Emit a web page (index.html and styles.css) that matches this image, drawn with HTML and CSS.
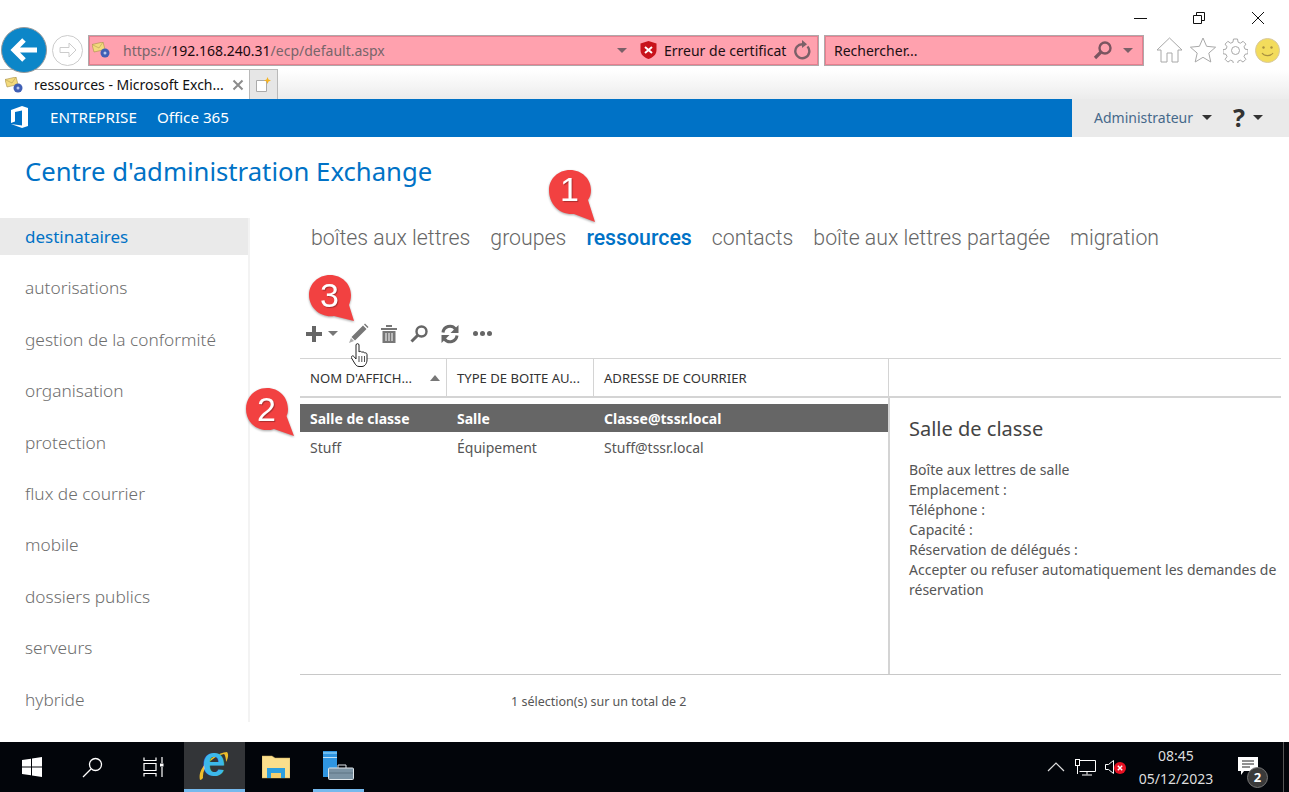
FILE: index.html
```html
<!DOCTYPE html>
<html lang="fr">
<head>
<meta charset="UTF-8">
<title>ressources - Microsoft Exchange</title>
<link rel="stylesheet" href="styles.css">
</head>
<body>
<div class="browser">
    <div class="win-controls">
        <svg width="14" height="14" viewBox="0 0 14 14"><path d="M1 7.500h13" stroke="#111" fill="none"/></svg>
        <svg width="14" height="14" viewBox="0 0 14 14"><path d="M1.500 4.500h8v8h-8zM4.500 4.500v-3h8v8h-3" stroke="#111" fill="none"/></svg>
        <svg width="14" height="14" viewBox="0 0 14 14"><path d="M1 1l12 12M13 1L1 13" stroke="#111" fill="none"/></svg>
    </div>
    <div class="nav-row">
        <div class="back-btn">
            <svg width="28" height="28" viewBox="0 0 28 28"><path d="M14 4L4 14l10 10M5 14h22" stroke="#fff" stroke-width="5" fill="none"/></svg>
        </div>
        <div class="fwd-btn">
            <svg width="20" height="20" viewBox="0 0 20 20"><path d="M11 3l7 7-7 7v-4.500H2v-5h9z" stroke="#ccc" fill="none"/></svg>
        </div>
        <div class="address">
            <svg class="site-icon" width="18" height="16" viewBox="0 0 18 16"><path d="M0 2.500L11 0l2 7.500-11 2.500z" fill="#f3da7c" stroke="#a8914c" stroke-width=".6"/><path d="M0 2.500l7 3.500 4-6" stroke="#a8914c" stroke-width=".5" fill="none"/><circle cx="13" cy="11" r="4.500" fill="#3f5fb5"/><circle cx="13" cy="11" r="1.500" fill="#b9c9ee"/></svg>
            <span class="url">https://<b>192.168.240.31</b>/ecp/default.aspx</span>
            <span class="caret caret-addr"></span>
            <svg class="shield" width="17" height="18" viewBox="0 0 17 18"><path d="M8.500 0l8 2.500V9c0 5-4 7.500-8 9-4-1.500-8-4-8-9V2.500z" fill="#c8131b"/><path d="M5 6l7 6M12 6l-7 6" stroke="#fff" stroke-width="2"/></svg>
            <span class="cert">Erreur de certificat</span>
            <svg class="reload" width="18" height="20" viewBox="0 0 18 20"><path d="M14.500 6.500a7 7 0 1 1-5-2.300" stroke="#7b6068" stroke-width="2.400" fill="none"/><path d="M9 0l5 4.200-5 3.800z" fill="#7b6068"/></svg>
        </div>
        <div class="search">
            <span class="search-text">Rechercher...</span>
            <svg width="20" height="20" viewBox="0 0 20 20"><circle cx="12" cy="8" r="5.500" stroke="#7b5560" stroke-width="2.400" fill="none"/><path d="M8 12l-6 6" stroke="#7b5560" stroke-width="3.200"/></svg>
            <span class="caret caret-search"></span>
        </div>
        <div class="tools">
            <svg width="27" height="26" viewBox="0 0 27 26"><path d="M1 13L13.500 1 26 13h-4v12h-6v-9h-5v9H5V13z" stroke="#a8a8a8" fill="#fff"/></svg>
            <svg width="26" height="26" viewBox="0 0 26 26"><path d="M13 1l3.600 8.300 9 .9-6.800 5.900 2 8.900L13 20.300l-7.800 4.700 2-8.900L.4 10.200l9-.9z" stroke="#a8a8a8" fill="#fff"/></svg>
            <svg width="25" height="25" viewBox="0 0 25 25"><circle cx="12.500" cy="12.500" r="4" stroke="#a8a8a8" fill="none"/><path d="M10.500 1h4l.6 3.200 2.300 1 2.700-1.900 2.800 2.800-1.900 2.700 1 2.300 3 .6v4l-3 .6-1 2.300 1.900 2.700-2.800 2.800-2.700-1.900-2.300 1-.6 3h-4l-.6-3-2.300-1-2.700 1.900-2.800-2.800 1.900-2.700-1-2.300-3-.6v-4l3-.6 1-2.300-1.900-2.700 2.800-2.800 2.700 1.900 2.300-1z" stroke="#a8a8a8" fill="none"/></svg>
            <svg width="25" height="25" viewBox="0 0 25 25"><circle cx="12.500" cy="12.500" r="12" fill="#f3dc5c" stroke="#d8c9a0"/><circle cx="8.500" cy="9.500" r="1.200" fill="#a89040"/><circle cx="16.500" cy="9.500" r="1.200" fill="#a89040"/><path d="M7 15c2.500 3.500 8.500 3.500 11 0" stroke="#a89040" stroke-width="1.200" fill="none"/></svg>
        </div>
    </div>
    <div class="tab-row">
        <div class="tab">
            <svg width="18" height="16" viewBox="0 0 18 16"><path d="M0 2.500L11 0l2 7.500-11 2.500z" fill="#f3da7c" stroke="#a8914c" stroke-width=".6"/><path d="M0 2.500l7 3.500 4-6" stroke="#a8914c" stroke-width=".5" fill="none"/><circle cx="13" cy="11" r="4.500" fill="#3f5fb5"/><circle cx="13" cy="11" r="1.500" fill="#b9c9ee"/></svg>
            <span class="tab-title">ressources - Microsoft Exch...</span>
            <svg width="12" height="12" viewBox="0 0 12 12"><path d="M1.500 1.500l9 9M10.500 1.500l-9 9" stroke="#8c8c8c" stroke-width="2"/></svg>
        </div>
        <div class="new-tab">
            <svg width="15" height="15" viewBox="0 0 15 15"><path d="M.5 3.500h10v11H.5z" fill="#fff" stroke="#aaa"/><path d="M11.500 0l1 2.500 2.500 1-2.500 1-1 2.500-1-2.500-2.500-1 2.500-1z" fill="#f5b324"/></svg>
        </div>
    </div>
</div>

<div class="topbar">
    <div class="topbar-left">
        <svg class="o365" width="20" height="22" viewBox="0 0 20 22"><path d="M1 4l11-4 6 2v18l-6 2-11-4 11 1.500V4.500L5 6v9.500L1 17z" fill="#fff"/></svg>
        <span class="top-link">ENTREPRISE</span>
        <span class="top-link">Office 365</span>
    </div>
    <div class="topbar-right">
        <span class="admin">Administrateur</span>
        <span class="caret caret-dark"></span>
        <span class="help">?</span>
        <span class="caret caret-dark"></span>
    </div>
</div>

<div class="page">
    <h1 class="page-title">Centre d'administration Exchange</h1>
    <div class="main">
        <ul class="sidebar">
            <li class="active">destinataires</li>
            <li>autorisations</li>
            <li>gestion de la conformité</li>
            <li>organisation</li>
            <li>protection</li>
            <li>flux de courrier</li>
            <li>mobile</li>
            <li>dossiers publics</li>
            <li>serveurs</li>
            <li>hybride</li>
        </ul>
        <div class="content">
            <div class="tabs">
                <span>boîtes aux lettres</span>
                <span>groupes</span>
                <span class="current">ressources</span>
                <span>contacts</span>
                <span>boîte aux lettres partagée</span>
                <span>migration</span>
            </div>
            <div class="toolbar">
                <svg width="20" height="20" viewBox="0 0 20 20"><path d="M10 2v16M2 10h16" stroke="#666" stroke-width="4"/></svg>
                <span class="caret caret-tool"></span>
                <svg class="t-edit" width="21" height="21" viewBox="0 0 21 21"><path d="M16 1.500l1-1 3.500 3.500-1 1zM15 2.500l3.500 3.500L7 17.500 3.500 14z" fill="#777"/><path d="M3 15l3 3-5 2z" fill="#aaa"/></svg>
                <svg class="t-del" width="16" height="18" viewBox="0 0 16 18"><path d="M0 3h16v2H0zM5 0h6v2H5zM1.500 6h13v12h-13z" fill="#777"/><path d="M5 8v8M8 8v8M11 8v8" stroke="#fff"/></svg>
                <svg class="t-find" width="20" height="20" viewBox="0 0 20 20"><circle cx="12.500" cy="7.500" r="5" stroke="#666" stroke-width="2.400" fill="none"/><path d="M8.500 11.500l-6 6" stroke="#666" stroke-width="3"/></svg>
                <svg class="t-sync" width="20" height="20" viewBox="0 0 20 20"><path d="M3 8.500A7 7 0 0 1 15.500 5M17 11.500A7 7 0 0 1 4.500 15" stroke="#666" stroke-width="3" fill="none"/><path d="M18.500 1v8h-8zM1.500 19v-8h8z" fill="#666"/></svg>
                <span class="dots"><i></i><i></i><i></i></span>
            </div>
            <div class="grid">
                <div class="grid-head">
                    <div class="th th-name">NOM D'AFFICH...<span class="sort"></span></div>
                    <div class="th th-type">TYPE DE BOITE AU...</div>
                    <div class="th th-mail">ADRESSE DE COURRIER</div>
                </div>
                <div class="grid-body">
                    <div class="rows">
                        <div class="row selected"><span class="c-name">Salle de classe</span><span class="c-type">Salle</span><span>Classe@tssr.local</span></div>
                        <div class="row"><span class="c-name">Stuff</span><span class="c-type">Équipement</span><span>Stuff@tssr.local</span></div>
                    </div>
                    <div class="details">
                        <h2 class="details-title">Salle de classe</h2>
                        <p>Boîte aux lettres de salle</p>
                        <p>Emplacement :</p>
                        <p>Téléphone :</p>
                        <p>Capacité :</p>
                        <p>Réservation de délégués :</p>
                        <p>Accepter ou refuser automatiquement les demandes de réservation</p>
                    </div>
                </div>
            </div>
            <div class="status">1 sélection(s) sur un total de 2</div>
        </div>
    </div>
</div>

<div class="taskbar">
    <div class="task-left">
        <div class="task-btn"><svg width="20" height="20" viewBox="0 0 20 20"><path d="M0 3l9-1.300V9.500H0zM10 1.500L20 0v9.500H10zM0 10.500h9v7.800L0 17zM10 10.500h10V20l-10-1.500z" fill="#fff"/></svg></div>
        <div class="task-btn"><svg width="22" height="22" viewBox="0 0 22 22"><circle cx="13.500" cy="8.500" r="6" stroke="#fff" stroke-width="1.300" fill="none"/><path d="M9 13l-8 8" stroke="#fff" stroke-width="1.300"/></svg></div>
        <div class="task-btn"><svg width="22" height="20" viewBox="0 0 22 20"><path d="M1 .5v3h12v-3M1 6.500h12v7H1zM1 19.500v-3h12v3M19 0v6M19 10v10" stroke="#fff" stroke-width="1.200" fill="none"/><rect x="17" y="6.500" width="3.500" height="3" fill="#fff"/></svg></div>
        <div class="task-btn task-open task-ie">
            <svg class="ie-ring" width="30" height="30" viewBox="0 0 30 30"><path d="M1 29C-2 18 12 3 28 1c2 2 1 7-1 10 0-4-1-7-2-8C12 6 3 17 4 27c-1 1-2 2-3 2z" fill="#efbd2a"/></svg>
            <span class="ie-e">e</span>
        </div>
        <div class="task-btn task-files"><svg width="28" height="24" viewBox="0 0 28 24"><path d="M0 1h10l3 2h15v20H0z" fill="#fbdf8c" stroke="#c9a95a" stroke-width=".5"/><path d="M5 23V13h18v10h-4v-5H9v5z" fill="#2d9fdf"/><rect x="9" y="18" width="10" height="5" fill="#f6cf6c"/></svg></div>
        <div class="task-btn task-open task-server"><svg width="31" height="29" viewBox="0 0 31 29"><rect x="0" y="0" width="14" height="26" fill="#2f95e0"/><rect x="0" y="6" width="14" height="1" fill="#bfe0f5"/><rect x="0" y="1" width="14" height="2" fill="#6cbcf0"/><path d="M15 17v-3h8v3" stroke="#dfe6ea" fill="none"/><rect x="5.500" y="17" width="25" height="11.500" rx="1" fill="#7b93a4" stroke="#dfe6ea"/><path d="M6 22h24" stroke="#5f7484"/></svg></div>
    </div>
    <div class="tray">
        <svg class="tray-up" width="18" height="10" viewBox="0 0 18 10"><path d="M1 9l8-8 8 8" stroke="#ddd" stroke-width="1.200" fill="none"/></svg>
        <svg width="21" height="17" viewBox="0 0 21 17"><path d="M4.500 1.500H20.500V12.500H4.500M12 12.500V15.500M7 16H17" stroke="#fff" fill="none"/><rect x=".5" y=".5" width="4" height="6" fill="#000" stroke="#fff"/><path d="M2.500 7V15" stroke="#fff"/></svg>
        <span class="sound"><svg width="9" height="14" viewBox="0 0 9 14"><path d="M.5 4.500h3l5-4v13l-5-4h-3z" stroke="#fff" fill="none"/></svg><svg width="12" height="12" viewBox="0 0 12 12"><circle cx="6" cy="6" r="6" fill="#e81123"/><path d="M3.800 3.800l4.400 4.400M8.200 3.800l-4.400 4.400" stroke="#fff" stroke-width="1.400"/></svg></span>
        <div class="clock"><span>08:45</span><span>05/12/2023</span></div>
        <div class="notify">
            <svg width="20" height="20" viewBox="0 0 20 20"><path d="M0 0h20v14H6l-3 4v-4H0z" fill="#fff"/><path d="M4 4h12M4 7h12M4 10h8" stroke="#222"/></svg>
            <span class="notify-count">2</span>
        </div>
        <div class="show-desktop"></div>
    </div>
</div>

<!-- annotations -->
<div class="pin pin-1"><svg width="52" height="56" viewBox="0 0 52 56"><path d="M24 2c12 0 21 9 21 20 0 4-1 7-3 10l7 22-21-8C13 47 3 36 3 22 3 11 12 2 24 2z" fill="#f24141"/></svg><span>1</span></div>
<div class="pin pin-2"><svg width="52" height="50" viewBox="0 0 52 50"><path d="M23 0c12 0 21 9 21 21 0 3-.5 5-1.500 7L50 48l-20-7C28 42 25 42 23 42 11 42 2 33 2 21S11 0 23 0z" fill="#f24141"/></svg><span>2</span></div>
<div class="pin pin-3"><svg width="48" height="52" viewBox="0 0 48 52"><path d="M22 1c12 0 21 9 21 20 0 4-1 7-2 10l5 16-20-5C13 44 1 34 1 21 1 10 10 1 22 1z" fill="#f24141"/></svg><span>3</span></div>
<svg class="cursor" width="19" height="24" viewBox="0 0 19 24"><path d="M5 2c0-1.800 3-1.800 3 0v7c.8-1 2.400-.8 2.800.3 1-.7 2.400-.3 2.700.7 1-.5 2.500 0 2.500 1.500V17c0 3-2 6.500-5 6.500H8c-2.500 0-3.500-2-4.500-3.500l-3-5c-.8-1.500 1.200-3 2.400-1.500L5 16z" fill="#fff" stroke="#222"/><path d="M8 13v6M10.800 13v6M13.500 13v6" stroke="#222" stroke-width=".8"/></svg>
</body>
</html>
```

FILE: styles.css
```css
* {
    box-sizing: border-box;
}
html, body {
    margin: 0;
    padding: 0;
}
body {
    width: 1289px;
    height: 792px;
    overflow: hidden;
    position: relative;
    display: flex;
    flex-direction: column;
    font-family: "Noto Sans", "Open Sans", sans-serif;
    background-color: #fff;
    color: #333;
}
svg {
    display: block;
    flex: none;
}
.caret {
    display: inline-block;
    flex: none;
    width: 0;
    height: 0;
    border-left: 5px solid transparent;
    border-right: 5px solid transparent;
    border-top: 5px solid #7b6068;
}

/* browser chrome */
.browser {
    height: 99px;
    flex: none;
    background: linear-gradient(#fff 70px, #ececec 99px);
}
.win-controls {
    height: 33px;
    display: flex;
    justify-content: flex-end;
    gap: 45px;
    padding: 11px 24px 0 0;
}
.nav-row {
    height: 34px;
    display: flex;
    align-items: center;
    padding-left: 1px;
}
.back-btn {
    width: 46px;
    height: 46px;
    border-radius: 50%;
    background-color: #0c86c8;
    border: 1px solid #999;
    display: flex;
    align-items: center;
    justify-content: center;
    position: relative;
    z-index: 2;
}
.fwd-btn {
    width: 31px;
    height: 31px;
    margin-left: 5px;
    border-radius: 50%;
    border: 1px solid #ccc;
    display: flex;
    align-items: center;
    justify-content: center;
}
.address, .search {
    height: 29px;
    display: flex;
    align-items: center;
    background-color: #ffa1ae;
    border: 1px solid #e87f8f;
    outline: 1px solid #b0a8aa;
    font-size: 14px;
}
.address {
    width: 729px;
    margin-left: 6px;
    padding: 0 6px 0 2px;
}
.url {
    margin-left: 13px;
    color: #77656a;
    width: 494px;
    flex: none;
}
.url b {
    font-weight: 400;
    color: #1a0a0e;
}
.shield {
    margin-left: 13px;
}
.cert {
    margin-left: 7px;
    color: #1c1014;
    white-space: nowrap;
}
.reload {
    margin-left: auto;
}
.search {
    width: 318px;
    margin-left: 7px;
    padding: 0 10px 0 8px;
}
.search-text {
    color: #1c1014;
    width: 259px;
    flex: none;
}
.caret-search {
    margin-left: 10px;
}
.tools {
    display: flex;
    align-items: center;
    gap: 7px;
    margin-left: 13px;
}
.tab-row {
    height: 32px;
    display: flex;
    align-items: flex-end;
}
.tab {
    width: 250px;
    height: 30px;
    display: flex;
    align-items: center;
    background-color: #fff;
    border: 1px solid #b9b9b9;
    border-bottom: none;
    border-left: none;
    padding: 0 5px 0 5px;
}
.tab-title {
    font-size: 14px;
    margin-left: 11px;
    width: 198px;
    flex: none;
    color: #111;
    white-space: nowrap;
}
.new-tab {
    width: 28px;
    height: 30px;
    display: flex;
    align-items: center;
    justify-content: center;
    background-color: #e6e6e6;
    border: 1px solid #b9b9b9;
    border-left: none;
    border-bottom: none;
}

/* blue bar */
.topbar {
    height: 38px;
    flex: none;
    background-color: #0072c6;
    display: flex;
    justify-content: space-between;
}
.topbar-left {
    display: flex;
    align-items: center;
    padding: 0 0 2px 10px;
}
.top-link {
    color: #fff;
    font-size: 15.200px;
    margin-right: 20px;
}
.o365 {
    margin-right: 20px;
}
.topbar-right {
    width: 217px;
    background-color: #eaeaea;
    display: flex;
    align-items: center;
    padding: 0 0 2px 22px;
}
.admin {
    color: #46698a;
    font-size: 14px;
    margin-right: 9px;
}
.caret-dark {
    border-top-color: #333;
}
.help {
    font-size: 25px;
    font-weight: 700;
    color: #333;
    margin: 0 8px 0 21px;
    line-height: 1;
}

/* page */
.page {
    flex: 1;
    min-height: 0;
}
.page-title {
    margin: 0;
    padding: 19px 0 0 25px;
    height: 81px;
    font-size: 25.700px;
    line-height: 32px;
    font-weight: 400;
    color: #0072c6;
}
.main {
    display: flex;
}
.sidebar {
    list-style-type: none;
    margin: 0;
    padding: 0;
    width: 250px;
    height: 504px;
    border-right: 2px solid #f3f3f3;
    font-size: 17.300px;
    font-weight: 300;
    color: #6e6e6e;
}
.sidebar li {
    height: 37px;
    line-height: 37px;
    padding-left: 25px;
    margin-bottom: 14.400px;
}
.sidebar .active {
    background-color: #eaeaea;
    color: #0072c6;
    font-size: 17px;
    font-weight: 400;
}
.content {
    width: 981px;
    margin-left: 50px;
}
.tabs {
    display: flex;
    gap: 20px;
    padding-left: 11px;
    height: 38px;
    font-family: Roboto, "Noto Sans", sans-serif;
    font-size: 21.300px;
    font-weight: 300;
    line-height: 39px;
    color: #666;
    white-space: nowrap;
}
.tabs .current {
    color: #0072c6;
    font-weight: 500;
}
.toolbar {
    height: 102px;
    display: flex;
    align-items: center;
    padding: 53px 0 0 4px;
}
.caret-tool {
    border-top-color: #777;
    margin: 0 0 0 4px;
}
.t-edit {
    margin-left: 10px;
}
.t-del {
    margin-left: 12px;
}
.t-find {
    margin-left: 12px;
}
.t-sync {
    margin-left: 11px;
}
.dots {
    display: flex;
    gap: 2px;
    margin-left: 13px;
}
.dots i {
    width: 5px;
    height: 5px;
    border-radius: 50%;
    background-color: #666;
}
.grid {
    border-bottom: 1px solid #c8c8c8;
}
.grid-head {
    height: 40px;
    display: flex;
    border-top: 1px solid #d4d4d4;
    border-bottom: 2px solid #d4d4d4;
    font-size: 13.100px;
    color: #333;
}
.th {
    padding-left: 10px;
    line-height: 39px;
    border-right: 1px solid #d4d4d4;
    white-space: nowrap;
    position: relative;
}
.th-name {
    width: 147px;
}
.th-type {
    width: 147px;
}
.th-mail {
    width: 295px;
}
.sort {
    position: absolute;
    right: 6px;
    top: 16px;
    width: 0;
    height: 0;
    border-left: 5px solid transparent;
    border-right: 5px solid transparent;
    border-bottom: 6px solid #777;
}
.grid-body {
    height: 276px;
    display: flex;
}
.rows {
    width: 588px;
    padding-top: 6px;
}
.row {
    height: 29px;
    line-height: 29px;
    display: flex;
    padding-left: 10px;
    font-size: 14px;
    color: #555;
}
.row.selected {
    height: 28px;
    line-height: 29px;
    background-color: #666;
    color: #fff;
    font-weight: 700;
    margin-bottom: 1px;
}
.c-name, .c-type {
    width: 147px;
    flex: none;
}
.details {
    flex: 1;
    border-left: 2px solid #d4d4d4;
    padding: 16px 0 0 19px;
    font-size: 14px;
    line-height: 20px;
    color: #555;
}
.details-title {
    margin: 0 0 16px;
    font-size: 20px;
    line-height: 30px;
    font-weight: 400;
    color: #444;
}
.details p {
    margin: 0;
}
.status {
    padding: 18px 0 0 211px;
    font-size: 12.500px;
    line-height: 18px;
    color: #555;
}

/* taskbar */
.taskbar {
    height: 50px;
    flex: none;
    background-color: #02050a;
    display: flex;
    justify-content: space-between;
}
.task-left {
    display: flex;
    padding-left: 1px;
}
.task-btn {
    width: 61px;
    height: 50px;
    display: flex;
    align-items: center;
    justify-content: center;
}
.task-open {
    border-bottom: 3px solid #76b9ed;
}
.task-ie {
    background-color: #333538;
    position: relative;
}
.ie-e {
    position: relative;
    font-family: "Liberation Sans", sans-serif;
    font-size: 42px;
    font-weight: 700;
    line-height: 42px;
    color: #3cb8ea;
    margin: -8px 0 0 -1px;
}
.ie-ring {
    position: absolute;
    left: 15px;
    top: 9px;
}
.task-server {
    width: 51px;
    margin-left: 7px;
}
.tray {
    display: flex;
    align-items: center;
}
.tray-up {
    margin-right: 10px;
}
.sound {
    display: flex;
    align-items: flex-end;
    margin-left: 9px;
}
.clock {
    width: 96px;
    margin-left: 2px;
    display: flex;
    flex-direction: column;
    align-items: center;
    color: #ddd;
    font-size: 14px;
    line-height: 23px;
}
.notify {
    position: relative;
    width: 36px;
    padding-left: 9px;
    margin-left: 5px;
}
.notify-count {
    position: absolute;
    left: 18px;
    top: 10px;
    width: 21px;
    height: 21px;
    border-radius: 50%;
    background-color: #3a3a3a;
    border: 1px solid #777;
    color: #fff;
    font-size: 13px;
    font-weight: 700;
    line-height: 19px;
    text-align: center;
}
.show-desktop {
    width: 6px;
    height: 50px;
    margin-left: 18px;
    border-left: 1px solid #555;
}

/* annotation pins and mouse cursor, over the page */
.pin {
    position: absolute;
    filter: drop-shadow(0 1px 1px rgba(0, 0, 0, 0.35));
}
.pin span {
    position: absolute;
    font-family: "Liberation Sans", sans-serif;
    font-size: 34px;
    line-height: 40px;
    color: #fff;
    text-shadow: 1px 1px 1px rgba(0, 0, 0, 0.3);
}
.pin-1 {
    left: 546px;
    top: 168px;
}
.pin-1 span {
    left: 14px;
    top: 1px;
}
.pin-2 {
    left: 244px;
    top: 388px;
}
.pin-2 span {
    left: 13px;
    top: 1px;
}
.pin-3 {
    left: 308px;
    top: 274px;
}
.pin-3 span {
    left: 12px;
    top: 1px;
}
.cursor {
    position: absolute;
    left: 351px;
    top: 343px;
}
```
